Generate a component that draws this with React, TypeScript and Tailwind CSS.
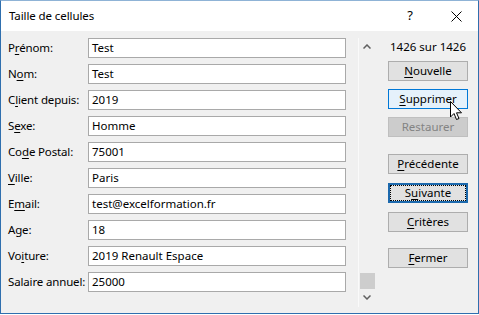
import React from 'react';

type Field = { label: string; key?: number; value: string };

const fields: Field[] = [
  { label: 'Prénom:', key: 1, value: 'Test' },
  { label: 'Nom:', key: 1, value: 'Test' },
  { label: 'Client depuis:', key: 1, value: '2019' },
  { label: 'Sexe:', key: 1, value: 'Homme' },
  { label: 'Code Postal:', key: 2, value: '75001' },
  { label: 'Ville:', key: 0, value: 'Paris' },
  { label: 'Email:', key: 1, value: 'test@excelformation.fr' },
  { label: 'Age:', value: '18' },
  { label: 'Voiture:', key: 2, value: '2019 Renault Espace' },
  { label: 'Salaire annuel:', value: '25000' },
];

// underline the access-key letter like a Windows dialog
function Mnemonic({ text, index }: { text: string; index?: number }) {
  if (index === undefined) return <>{text}</>;
  return (
    <>
      {text.slice(0, index)}
      <span className="underline underline-offset-2">{text[index]}</span>
      {text.slice(index + 1)}
    </>
  );
}

type BtnVariant = 'normal' | 'hover' | 'disabled' | 'default';

function DialogButton({ text, index, variant = 'normal' }: { text: string; index?: number; variant?: BtnVariant }) {
  const styles: Record<BtnVariant, string> = {
    normal: 'border border-[#adadad] bg-[#e1e1e1] text-black',
    hover: 'border border-[#0078d7] bg-[#e5f1fb] text-black',
    disabled: 'border border-[#bfbfbf] bg-[#cccccc] text-[#838383]',
    default: 'border-2 border-[#1c69ad] bg-[#e1e1e1] text-black',
  };
  return (
    <div className={`flex h-[20px] w-[80px] items-center justify-center whitespace-nowrap text-[11.5px] ${styles[variant]}`}>
      {variant === 'default' ? (
        <div className="flex h-[14px] w-[74px] items-center justify-center outline-1 outline-dotted outline-black">
          <Mnemonic text={text} index={index} />
        </div>
      ) : (
        <Mnemonic text={text} index={index} />
      )}
    </div>
  );
}

function Cursor() {
  return (
    <svg className="absolute left-[449px] top-[100px]" width="13" height="20" viewBox="0 0 13 20">
      <path d="M0.5 0.5 L0.5 16 L4 12.5 L6.5 18.5 L9 17.5 L6.5 11.8 L11.5 11.8 Z" fill="#fff" stroke="#000" strokeWidth="1" strokeLinejoin="round" />
    </svg>
  );
}

export default function App() {
  return (
    <div
      className="relative flex h-[314px] w-[479px] flex-col border border-[#2f6fae] border-t-[#8fb3d6] bg-[#f0f0f0] text-black"
      style={{ fontFamily: '"Noto Sans", "Open Sans", sans-serif' }}
    >
      {/* title bar */}
      <div className="flex h-[30px] items-center bg-white pl-[8px] text-[11.5px]">
        <span className="flex-1 tracking-[-0.1px]">Taille de cellules</span>
        <span className="w-[14px] text-center text-[13px]">?</span>
        <svg className="ml-[34px] mr-[16px]" width="11" height="11" viewBox="0 0 11 11">
          <path d="M0.5 0.5 L10.5 10.5 M10.5 0.5 L0.5 10.5" stroke="#000" strokeWidth="1" />
        </svg>
      </div>

      <div className="flex flex-1">
        {/* form fields */}
        <div className="flex flex-col gap-[6px] pl-[7px] pt-[7px]">
          {fields.map((f) => (
            <div key={f.label} className="flex h-[20px] items-center">
              <div className="w-[80px] whitespace-nowrap text-[11.5px] tracking-[-0.15px]">
                <Mnemonic text={f.label} index={f.key} />
              </div>
              <div className="flex h-[20px] w-[258px] items-center border border-[#a9a9a9] bg-white pl-[3px] text-[11.5px]">{f.value}</div>
            </div>
          ))}
        </div>

        {/* scrollbar */}
        <div className="ml-[12px] mt-[7px] flex h-[269px] w-[17px] flex-col items-center border-l border-[#fafafa] bg-[#f0f0f0]">
          <svg className="mt-[6px]" width="8" height="5" viewBox="0 0 8 5">
            <path d="M0.5 4.5 L4 1 L7.5 4.5" fill="none" stroke="#606060" strokeWidth="1.5" />
          </svg>
          <div className="flex-1" />
          <div className="h-[16px] w-[15px] bg-[#cdcdcd]" />
          <svg className="mb-[7px] mt-[6px]" width="8" height="5" viewBox="0 0 8 5">
            <path d="M0.5 0.5 L4 4 L7.5 0.5" fill="none" stroke="#606060" strokeWidth="1.5" />
          </svg>
        </div>

        {/* buttons */}
        <div className="ml-[13px] flex flex-col">
          <div className="mt-[7px] flex h-[17px] w-[80px] items-center justify-center whitespace-nowrap text-[11.5px]">1426 sur 1426</div>
          <div className="mt-[6px] flex flex-col gap-[8px]">
            <DialogButton text="Nouvelle" index={0} />
            <DialogButton text="Supprimer" index={0} variant="hover" />
            <DialogButton text="Restaurer" variant="disabled" />
          </div>
          <div className="mt-[17px] flex flex-col gap-[9px]">
            <DialogButton text="Précédente" index={0} />
            <DialogButton text="Suivante" index={1} variant="default" />
            <DialogButton text="Critères" index={0} />
          </div>
          <div className="mt-[16px]">
            <DialogButton text="Fermer" index={0} />
          </div>
        </div>
      </div>
      <Cursor />
    </div>
  );
}
